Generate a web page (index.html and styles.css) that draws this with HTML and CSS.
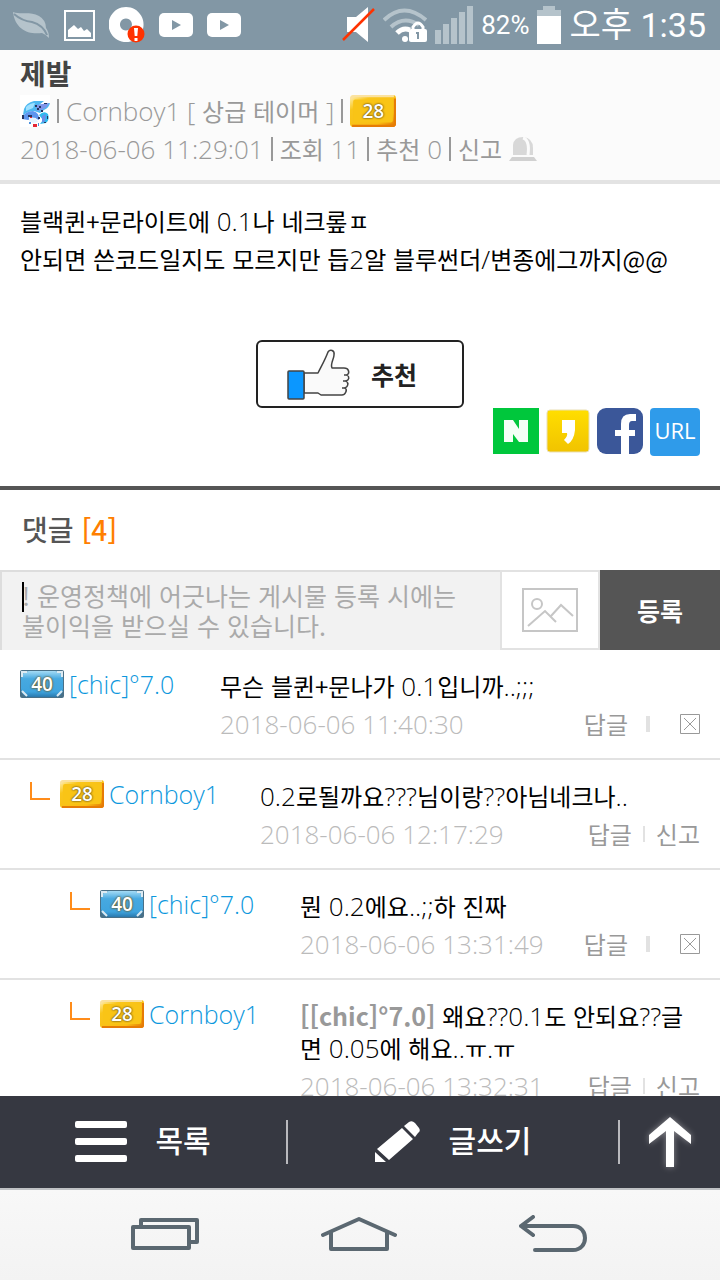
FILE: index.html
```html
<!DOCTYPE html>
<html lang="ko">
<head>
    <meta charset="UTF-8">
    <meta name="viewport" content="width=device-width, initial-scale=1.0">
    <title>제발</title>
    <link rel="stylesheet" href="styles.css">
</head>
<body>
    <svg class="defs" width="0" height="0" aria-hidden="true">
        <defs>
            <linearGradient id="gold" x1="0" y1="0" x2="1" y2="1">
                <stop offset="0" stop-color="#fff3c0" />
                <stop offset="0.25" stop-color="#f9c61c" />
                <stop offset="0.75" stop-color="#f9bd14" />
                <stop offset="1" stop-color="#e06a00" />
            </linearGradient>
            <linearGradient id="sky" x1="0" y1="0" x2="0" y2="1">
                <stop offset="0" stop-color="#a5dbf5" />
                <stop offset="0.3" stop-color="#47a9e0" />
                <stop offset="0.8" stop-color="#3fa4de" />
                <stop offset="1" stop-color="#2a78ad" />
            </linearGradient>
            <symbol id="badge-gold" viewBox="0 0 44 28" preserveAspectRatio="none">
                <rect width="44" height="28" rx="3" fill="url(#gold)" />
                <path d="M1 4Q1 1 4 1H42" fill="none" stroke="#fbe2a0" stroke-width="2" />
                <rect x="3" y="4" width="38" height="20" rx="2" fill="#f9c416" />
                <path d="M2 27H41Q43 27 43 25V3" fill="none" stroke="#e67c06" stroke-width="2" />
            </symbol>
            <symbol id="badge-sky" viewBox="0 0 44 28" preserveAspectRatio="none">
                <rect width="44" height="28" rx="2" fill="#497087" />
                <rect x="1" y="1" width="42" height="26" rx="8" fill="url(#sky)" />
                <path d="M2 7V2H7M37 2H42V7M42 21L37 26M7 26L2 21" fill="none" stroke="#dceaf2" stroke-width="2" />
            </symbol>
        </defs>
    </svg>

    <div class="status-bar">
        <div class="status-left">
            <svg width="38" height="30" viewBox="0 0 38 30">
                <path d="M1 2C9 5 18 1 27 6Q34 10 34 18Q37 22 37 28Q33 24 30 23C16 25 3 19 1 2Z" fill="#b5c3cb" />
                <path d="M2 4Q10 11 20 12Q31 15 35 25" fill="none" stroke="#8297a5" stroke-width="2" />
            </svg>
            <svg width="31" height="31" viewBox="0 0 31 31">
                <rect x="1" y="1" width="29" height="29" fill="none" stroke="#fff" stroke-width="2" />
                <path d="M4 27V20L10 15L14 19L17 17L20 21L23 19L27 23V27Z" fill="#fff" />
            </svg>
            <svg width="36" height="36" viewBox="0 0 36 36">
                <path d="M17 0a17.500 17.500 0 1 0 0.100 0zM17 11.500a6 6 0 1 1-0.100 0z" fill="#fff" fill-rule="evenodd" />
                <circle cx="27" cy="27" r="8.500" fill="#ff3200" />
                <path d="M25 21H29L28.300 29H25.700ZM25.500 31H28.500V34H25.500Z" fill="#fff" />
            </svg>
            <svg width="34" height="24" viewBox="0 0 34 24">
                <rect width="34" height="24" rx="5" fill="#fff" />
                <path d="M13 7L22 12L13 17Z" fill="#8297a5" />
            </svg>
            <svg width="34" height="24" viewBox="0 0 34 24">
                <rect width="34" height="24" rx="5" fill="#fff" />
                <path d="M13 7L22 12L13 17Z" fill="#8297a5" />
            </svg>
        </div>
        <div class="status-right">
            <svg width="33" height="36" viewBox="0 0 33 36">
                <path d="M5 10H14L26 0V35L14 25H5Z" fill="#fff" />
                <path d="M1 33L32 2" stroke="#ff3200" stroke-width="2.500" />
            </svg>
            <svg width="44" height="36" viewBox="0 0 44 36">
                <path d="M1 13Q21 -6 43 13" fill="none" stroke="#b5c3cb" stroke-width="4" />
                <path d="M8 20Q21 8 36 18" fill="none" stroke="#b5c3cb" stroke-width="4" />
                <path d="M14 26Q20 20 27 23" fill="none" stroke="#fff" stroke-width="5" />
                <circle cx="22" cy="32" r="3" fill="#fff" />
                <path d="M30 23V20Q35 12 40 20V23" fill="none" stroke="#fff" stroke-width="3" />
                <rect x="26" y="22" width="18" height="13" rx="2" fill="#fff" />
                <path d="M33 25H36V32H34V27H33Z" fill="#8297a5" />
            </svg>
            <svg width="38" height="38" viewBox="0 0 38 38" fill="#b5c3cb">
                <path d="M0 24H6V38H0ZM8 18H14V38H8ZM16 12H22V38H16ZM24 6H30V38H24ZM32 0H38V38H32Z" />
            </svg>
            <span class="battery-text">82%</span>
            <svg width="24" height="38" viewBox="0 0 24 38">
                <path d="M6 0H18V4H24V10H0V4H6Z" fill="#b5c3cb" />
                <rect y="10" width="24" height="28" fill="#fff" />
            </svg>
            <span class="clock">오후 1:35</span>
        </div>
    </div>

    <main class="content">
        <header class="post-head">
            <h1>제발</h1>
            <div class="meta">
                <svg class="avatar" width="30" height="32" viewBox="0 0 30 32">
                    <rect width="30" height="32" fill="#fff" />
                    <path d="M4 14Q6 8 14 6L24 6L19 10L30 8Q29 13 24 15L20 18L14 16L8 17L3 20Z" fill="#4db8f0" />
                    <path d="M6 12Q10 8 15 8L13 13L6 16Z" fill="#9fe0ff" />
                    <path d="M16 10L29 8Q27 13 21 15L17 16Z" fill="#7f96ea" />
                    <path d="M2 22Q6 16 13 16Q20 18 19 25L14 23L8 25L2 24Z" fill="#5d95ee" />
                    <path d="M9 22L16 23L18 27L13 28L9 26Z" fill="#e4f4ff" />
                    <path d="M19 20Q24 15 28 19Q30 25 26 28L20 29L23 25Z" fill="#2dbbee" />
                    <path d="M22 21L26 19L25 26L22 28Z" fill="#6a8fe8" />
                    <path d="M2 20H4V24H2ZM8 20H12V22H8ZM15 10H17V12H15ZM17 13H19V15H17ZM19 11H21V13H19ZM24 8H27V9H24ZM21 15H23V17H21ZM18 22H20V24H18ZM27 21H28V24H27ZM24 27H26V28H24Z" fill="#26355d" />
                    <path d="M13 29H17V32H13ZM10 22H12V23H10Z" fill="#e52634" />
                    <path d="M9 27H11V29H9ZM18 28H19V31H18Z" fill="#4d91dd" />
                </svg>
                <i class="bar"></i>
                <span><span class="latin">Cornboy1 [</span> 상급 테이머 <span class="latin">]</span></span>
                <i class="bar"></i>
                <span class="badge big"><svg><use href="#badge-gold" /></svg><b>28</b></span>
            </div>
            <div class="meta">
                <span class="latin">2018-06-06 11:29:01</span>
                <i class="bar"></i>
                <span>조회 <span class="latin">11</span></span>
                <i class="bar"></i>
                <span>추천 <span class="latin">0</span></span>
                <i class="bar"></i>
                <a href="#report">신고</a>
                <svg width="28" height="26" viewBox="0 0 28 26">
                    <path d="M4 19V9Q5 1 14 1Q24 2 24 12V19Z" fill="#d8d8d8" />
                    <path d="M14 2Q21 4 19 19" fill="none" stroke="#fbfbfb" stroke-width="3" />
                    <path d="M3 21H25L28 25H0Z" fill="#d1d1d1" />
                </svg>
            </div>
        </header>

        <article class="post-body">
            <p>블랙퀸+문라이트에 <span class="latin">0.1</span>나 네크롶ㅍ<br>안되면 쓴코드일지도 모르지만 듭<span class="latin">2</span>알 블루썬더<span class="latin">/</span>변종에그까지@@</p>
            <button class="like" type="button">
                <svg width="64" height="52" viewBox="0 0 64 52" stroke="#444" stroke-width="1.500" stroke-linejoin="round">
                    <path d="M17 25H31C35 17 38 12 41 4C43 1 48 2 47 7C47 11 43 16 45 20H57C62 20 63 25 60 27C63 29 62 32 59 33C62 35 61 39 58 40C61 42 58 47 55 47H34L31 45H17Z" fill="#fafafa" />
                    <path d="M60 27H57M59 33H56M58 40H55" fill="none" />
                    <rect x="1" y="23" width="16" height="28" rx="1" fill="#0b97ff" />
                </svg>
                <span>추천</span>
            </button>
            <div class="share">
                <a class="naver" href="#naver" aria-label="네이버">
                    <svg width="46" height="46" viewBox="0 0 46 46"><path d="M11 12H20L26 21V12H35V34H26L20 26V34H11Z" fill="#f4fff6" /></svg>
                </a>
                <a href="#kakao" aria-label="카카오스토리">
                    <svg width="44" height="46" viewBox="0 0 44 46">
                        <defs><linearGradient id="story" x2="0" y2="1"><stop stop-color="#ffde00" /><stop offset="1" stop-color="#f1c300" /></linearGradient></defs>
                        <rect x="1" y="2" width="42" height="42" rx="3" fill="url(#story)" stroke="#e9dfb5" />
                        <path d="M16 12H29V22Q28 32 22 36L18 32Q22 28 21 25H16Z" fill="#fff" />
                    </svg>
                </a>
                <a href="#facebook" aria-label="페이스북">
                    <svg width="46" height="46" viewBox="0 0 46 46">
                        <rect width="46" height="46" rx="9" fill="#3b5799" />
                        <path d="M24 46V28H18V22H24V16Q24 6 33 6H39V13H35Q32 13 32 17V22H38V28H32V46Z" fill="#fff" />
                    </svg>
                </a>
                <button class="url" type="button">URL</button>
            </div>
        </article>

        <section class="comments">
            <h2>댓글 <em>[4]</em></h2>
            <form class="write">
                <div class="box">
                    <textarea aria-label="댓글 입력" rows="2" placeholder="! 운영정책에 어긋나는 게시물 등록 시에는 불이익을 받으실 수 있습니다."></textarea>
                    <i class="caret"></i>
                </div>
                <button class="photo" type="button" aria-label="사진">
                    <svg width="56" height="44" viewBox="0 0 56 44" fill="none" stroke="#c6c6c6" stroke-width="2">
                        <rect x="1" y="1" width="54" height="42" />
                        <circle cx="15" cy="16" r="5" />
                        <path d="M6 38L23 23L34 34M29 28L39 17L51 28" />
                    </svg>
                </button>
                <button class="submit" type="submit">등록</button>
            </form>

            <ul class="list">
                <li>
                    <div class="author"><span class="badge"><svg><use href="#badge-sky" /></svg><b>40</b></span><a href="#chic">[chic]°7.0</a></div>
                    <div>
                        <p>무슨 블퀸+문나가 <span class="latin">0.1</span>입니까<span class="latin">..;;;</span></p>
                        <div class="foot">
                            <time>2018-06-06 11:40:30</time>
                            <span class="actions own"><a href="#reply">답글</a><i></i><button type="button" aria-label="삭제"><svg width="20" height="20" viewBox="0 0 20 20" fill="none" stroke="#999"><path d="M0.500 0.500H19.500V19.500H0.500ZM4 4L16 16M16 4L4 16" /></svg></button></span>
                        </div>
                    </div>
                </li>
                <li class="depth1">
                    <div class="author"><i class="branch"></i><span class="badge"><svg><use href="#badge-gold" /></svg><b>28</b></span><a href="#cornboy1">Cornboy1</a></div>
                    <div>
                        <p><span class="latin">0.2</span>로될까요<span class="latin">???</span>님이랑<span class="latin">??</span>아님네크나<span class="latin">..</span></p>
                        <div class="foot">
                            <time>2018-06-06 12:17:29</time>
                            <span class="actions"><a href="#reply">답글</a><i></i><a href="#report">신고</a></span>
                        </div>
                    </div>
                </li>
                <li class="depth2">
                    <div class="author"><i class="branch"></i><span class="badge"><svg><use href="#badge-sky" /></svg><b>40</b></span><a href="#chic">[chic]°7.0</a></div>
                    <div>
                        <p>뭔 <span class="latin">0.2</span>에요<span class="latin">..;;</span>하 진짜</p>
                        <div class="foot">
                            <time>2018-06-06 13:31:49</time>
                            <span class="actions own"><a href="#reply">답글</a><i></i><button type="button" aria-label="삭제"><svg width="20" height="20" viewBox="0 0 20 20" fill="none" stroke="#999"><path d="M0.500 0.500H19.500V19.500H0.500ZM4 4L16 16M16 4L4 16" /></svg></button></span>
                        </div>
                    </div>
                </li>
                <li class="depth2">
                    <div class="author"><i class="branch"></i><span class="badge"><svg><use href="#badge-gold" /></svg><b>28</b></span><a href="#cornboy1">Cornboy1</a></div>
                    <div>
                        <p><strong>[[chic]°7.0]</strong> 왜요<span class="latin">??0.1</span>도 안되요<span class="latin">??</span>글면 <span class="latin">0.05</span>에 해요<span class="latin">..</span>ㅠ<span class="latin">.</span>ㅠ</p>
                        <div class="foot">
                            <time>2018-06-06 13:32:31</time>
                            <span class="actions"><a href="#reply">답글</a><i></i><a href="#report">신고</a></span>
                        </div>
                    </div>
                </li>
            </ul>
        </section>
    </main>

    <nav class="toolbar">
        <a class="to-list" href="#list">
            <svg width="52" height="42" viewBox="0 0 52 42" fill="#fff">
                <rect width="52" height="7" rx="2" />
                <rect y="17" width="52" height="7" rx="2" />
                <rect y="34" width="52" height="7" rx="2" />
            </svg>
            <span>목록</span>
        </a>
        <a class="to-write" href="#write">
            <svg width="46" height="42" viewBox="0 0 46 42" fill="#fff">
                <path d="M0 31L11 41H0ZM2 28L27 7L38 18L14 39ZM29 5L34 1Q37 -1 40 2L44 7Q46 10 43 12L40 16Z" />
            </svg>
            <span>글쓰기</span>
        </a>
        <a class="to-top" href="#top" aria-label="위로">
            <svg width="42" height="50" viewBox="0 0 42 50" fill="#fff"><path d="M21 0L42 18V27L25 14V50H17V14L0 27V18Z" /></svg>
        </a>
    </nav>

    <div class="keys">
        <button type="button" aria-label="최근 앱">
            <svg width="68" height="32" viewBox="0 0 68 32"><path d="M2 9H58V30H2ZM10 9V2H66V24H58" /></svg>
        </button>
        <button type="button" aria-label="홈">
            <svg width="76" height="36" viewBox="0 0 76 36"><path d="M2 19L38 3L74 19M10 16V33H66V16" /></svg>
        </button>
        <button type="button" aria-label="뒤로">
            <svg width="68" height="38" viewBox="0 0 68 38"><path d="M14 2L2 11L14 20M2 11H54C70 11 70 35 54 35H16" /></svg>
        </button>
    </div>
</body>
</html>
```
FILE: styles.css
```css
* {
    box-sizing: border-box;
}
body {
    margin: 0;
    height: 100vh;
    display: flex;
    flex-direction: column;
    overflow: hidden;
    background: #ffffff;
    color: #000000;
    font-family: "Noto Sans CJK KR", sans-serif;
    font-size: 24px;
}
h1, h2, p, ul {
    margin: 0;
    padding: 0;
}
a {
    color: inherit;
    text-decoration: none;
}
button {
    padding: 0;
    border: 0;
    background: none;
    color: inherit;
    font-family: inherit;
}
svg {
    display: block;
    flex: none;
}
.defs {
    position: absolute;
}
.latin, time, .author a {
    font-family: "Open Sans", "Noto Sans CJK KR", sans-serif;
    font-size: 26px;
    font-weight: 300;
    line-height: 1;
}
.author a {
    font-size: 25px;
}

/* Phone status bar */
.status-bar {
    flex: none;
    display: flex;
    justify-content: space-between;
    align-items: center;
    height: 50px;
    padding: 0 14px 0 12px;
    background: #8297a5;
    color: #ffffff;
}
.status-left {
    display: flex;
    align-items: center;
    gap: 14px;
}
.status-right {
    display: flex;
    align-items: center;
    gap: 8px;
}
.battery-text {
    font-family: Roboto, sans-serif;
    font-size: 26px;
}
.clock {
    font-family: Roboto, "Noto Sans CJK KR", sans-serif;
    font-size: 34px;
    line-height: 48px;
}

/* Post */
.content {
    flex: 1;
    min-height: 0;
    overflow: hidden;
}
.post-head {
    padding: 4px 20px 12px;
    background: #fbfbfb;
    border-bottom: 4px solid #e3e3e3;
}
.post-head h1 {
    color: #444444;
    font-size: 28px;
    font-weight: 700;
    line-height: 38px;
}
.meta {
    display: flex;
    align-items: center;
    gap: 7px;
    height: 38px;
    color: #999999;
    line-height: 36px;
    white-space: nowrap;
}
.bar {
    width: 2px;
    height: 24px;
    background: #999999;
}
.badge {
    position: relative;
    flex: none;
    display: flex;
    align-items: center;
    justify-content: center;
    width: 44px;
    height: 28px;
}
.badge.big {
    width: 46px;
    height: 32px;
}
.badge svg {
    position: absolute;
    width: 100%;
    height: 100%;
}
.badge b {
    position: relative;
    color: #ffffff;
    font-family: "Open Sans", sans-serif;
    font-size: 19px;
    font-weight: 600;
    line-height: 28px;
    text-shadow: 0 0 2px #6b5518, 0 0 2px #6b5518;
}
.post-body {
    padding: 18px 20px 30px;
    border-bottom: 4px solid #555555;
}
.post-body p {
    line-height: 38px;
}
.like {
    display: flex;
    align-items: center;
    justify-content: center;
    gap: 20px;
    width: 208px;
    height: 68px;
    margin: 62px auto 0;
    padding-right: 16px;
    border: 2px solid #222222;
    border-radius: 6px;
    color: #222222;
    font-size: 25px;
    font-weight: 700;
}
.share {
    display: flex;
    justify-content: flex-end;
    gap: 7px;
    height: 48px;
}
.naver {
    height: 46px;
    background: #00c73c;
}
.url {
    width: 50px;
    height: 48px;
    padding-bottom: 4px;
    border-radius: 4px;
    background: #2f9bea;
    color: #ffffff;
    font-family: "Open Sans", sans-serif;
    font-size: 22px;
    font-weight: 400;
}

/* Comments */
.comments h2 {
    padding: 0 22px 2px;
    color: #555555;
    font-size: 28px;
    font-weight: 500;
    line-height: 78px;
}
.comments h2 em {
    color: #ff7f00;
    font-style: normal;
}
.write {
    display: flex;
    height: 80px;
}
.box {
    position: relative;
    flex: 1;
}
.box textarea {
    display: block;
    width: 100%;
    height: 100%;
    padding: 8px 20px 0;
    border: 2px solid #dddddd;
    border-width: 2px 0 0 2px;
    border-radius: 0;
    background: #f2f2f2;
    font-family: "Noto Sans CJK KR", sans-serif;
    font-size: 25px;
    line-height: 30px;
    resize: none;
    overflow: hidden;
}
.box textarea::placeholder {
    color: #aaaaaa;
}
.caret {
    position: absolute;
    top: 12px;
    left: 22px;
    width: 2px;
    height: 30px;
    background: #000000;
}
.photo {
    display: flex;
    align-items: center;
    justify-content: center;
    width: 100px;
    border: 2px solid #e2e2e2;
}
.submit {
    width: 120px;
    background: #555555;
    color: #ffffff;
    font-size: 25px;
    font-weight: 700;
}
.list {
    list-style: none;
}
.list li {
    display: grid;
    grid-template-columns: 200px 1fr;
    padding: 20px 20px 15px;
    border-bottom: 2px solid #e2e2e2;
}
.list .depth1 {
    padding-left: 60px;
}
.list .depth2 {
    padding-left: 100px;
}
.author {
    position: relative;
    display: flex;
    align-items: center;
    gap: 5px;
    height: 28px;
    color: #0d98dd;
}
.branch {
    position: absolute;
    top: 2px;
    left: -30px;
    width: 20px;
    height: 18px;
    border: solid #ff8c1a;
    border-width: 0 0 2px 2px;
}
.list p {
    margin-bottom: 3px;
    line-height: 32px;
    word-break: break-all;
}
.list strong {
    color: #999999;
    font-size: 25px;
    line-height: 1;
}
.foot {
    display: flex;
    justify-content: space-between;
    align-items: center;
    height: 38px;
    line-height: 36px;
}
.foot time {
    color: #bbbbbb;
}
.actions {
    display: flex;
    align-items: center;
    gap: 11px;
    height: 36px;
    color: #999999;
}
.actions i {
    width: 2px;
    height: 16px;
    background: #e2e2e2;
}
.own {
    gap: 18px;
}
.own i {
    width: 4px;
    margin-right: 12px;
}

/* Bottom bars */
.toolbar {
    flex: none;
    display: grid;
    grid-template-columns: 288fr 332fr 100fr;
    align-items: center;
    height: 92px;
    background: #363841;
    color: #ffffff;
    font-size: 30px;
    font-weight: 500;
}
.toolbar a {
    display: flex;
    align-items: center;
    justify-content: center;
    gap: 28px;
    height: 44px;
}
.toolbar span {
    padding-bottom: 6px;
}
.to-list, .to-write {
    border-right: 2px solid #b9b9bd;
}
.to-top svg {
    filter: drop-shadow(0 0 3px #8a8a8f);
}
.keys {
    flex: none;
    display: flex;
    align-items: center;
    justify-content: center;
    gap: 122px;
    height: 92px;
    padding: 0 2px 2px 0;
    border-top: 2px solid #bfc1c4;
    background: linear-gradient(#f8f8f8, #f3f3f3);
}
.keys svg {
    fill: none;
    stroke: #5b6871;
    stroke-width: 4;
    stroke-linecap: round;
    stroke-linejoin: round;
}
```
